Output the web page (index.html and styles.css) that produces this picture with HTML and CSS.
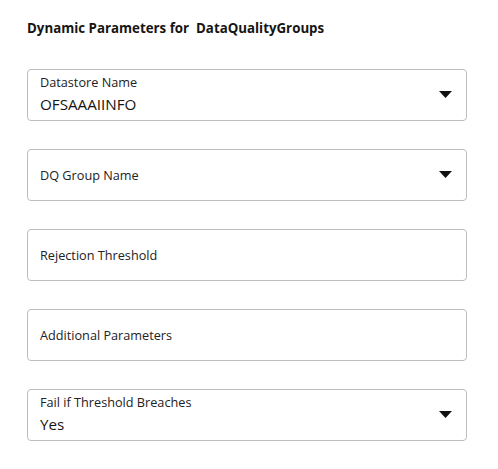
FILE: index.html
```html
<!DOCTYPE html>
<html>
<head>
<meta charset="utf-8">
<link rel="stylesheet" href="styles.css">
</head>
<body>
<div class="panel">
  <h2 class="title">Dynamic Parameters for&nbsp; DataQualityGroups</h2>
  <div class="fields">
    <div class="field select filled">
      <div class="content">
        <span class="label">Datastore Name</span>
        <span class="value">OFSAAAIINFO</span>
      </div>
      <svg class="caret" width="13" height="7" viewBox="0 0 13 7"><path d="M0 0H13L6.5 7Z" fill="#111"/></svg>
    </div>
    <div class="field select">
      <div class="content">
        <span class="label empty">DQ Group Name</span>
      </div>
      <svg class="caret" width="13" height="7" viewBox="0 0 13 7"><path d="M0 0H13L6.5 7Z" fill="#111"/></svg>
    </div>
    <div class="field">
      <div class="content">
        <span class="label empty">Rejection Threshold</span>
      </div>
    </div>
    <div class="field">
      <div class="content">
        <span class="label empty">Additional Parameters</span>
      </div>
    </div>
    <div class="field select filled">
      <div class="content">
        <span class="label">Fail if Threshold Breaches</span>
        <span class="value">Yes</span>
      </div>
      <svg class="caret" width="13" height="7" viewBox="0 0 13 7"><path d="M0 0H13L6.5 7Z" fill="#111"/></svg>
    </div>
  </div>
</div>
</body>
</html>
```
FILE: styles.css
```css
html, body {
  margin: 0;
  padding: 0;
  background: #fff;
}
body {
  font-family: "Open Sans", "Noto Sans", sans-serif;
  color: #1a1a1a;
}
.panel {
  padding: 18px 31px 0 27px;
}
.title {
  margin: 0;
  font-size: 13.3px;
  font-weight: 700;
  line-height: 20px;
  color: #161513;
}
.fields {
  display: flex;
  flex-direction: column;
  gap: 28px;
  margin-top: 31px;
}
.field {
  height: 50px;
  border: 1px solid #bdbdbd;
  border-radius: 4px;
  display: flex;
  align-items: center;
  padding: 0 14px 0 12px;
}
.content {
  flex: 1;
  display: flex;
  flex-direction: column;
}
.label {
  font-size: 12.7px;
  line-height: 16px;
  color: #222;
}
.filled .content {
  margin-top: -2px;
}
.value {
  font-size: 15.2px;
  line-height: 22px;
  color: #161513;
  margin-top: 3px;
}
.caret {
  display: block;
  margin-top: -1px;
}
```
